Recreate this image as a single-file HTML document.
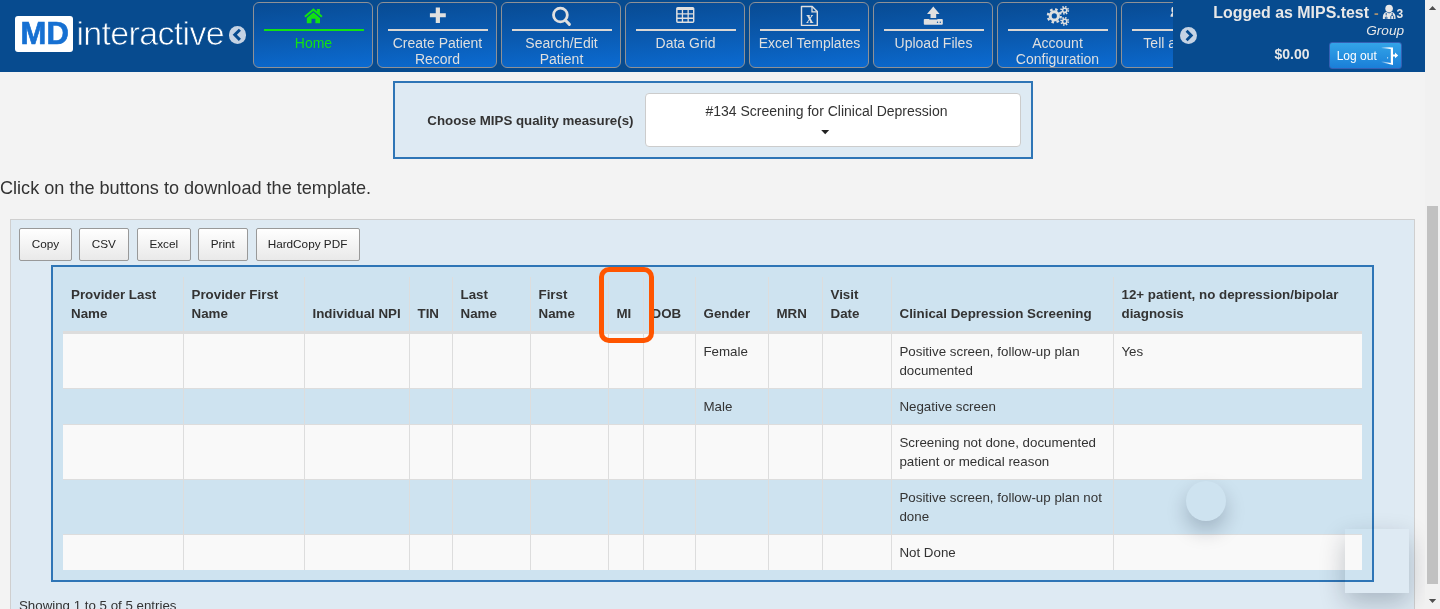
<!DOCTYPE html>
<html><head><meta charset="utf-8">
<style>
*{box-sizing:border-box}
html,body{margin:0;padding:0}
body{width:1440px;height:609px;overflow:hidden;background:#f3f3f3;font-family:"Liberation Sans",Arial,sans-serif;color:#333;position:relative}
#hdr{position:absolute;left:0;top:0;width:1425px;height:72px;background:#074b8f;overflow:hidden}
.logo-box{position:absolute;left:15px;top:16px;width:58.2px;height:36px;background:#fff;border-radius:3px}
.logo-md{position:absolute;left:20.6px;top:16px;color:#1670d2;font-weight:bold;font-size:31px;line-height:36px;letter-spacing:0.2px;-webkit-text-stroke:0.7px #1670d2}
.logo-txt{position:absolute;left:76.5px;top:13.3px;font-size:34px;line-height:40px;color:#fff;letter-spacing:-0.68px;-webkit-text-stroke:0.75px #074b8f}
.nav{position:absolute;top:2px;width:120px;height:66px;border:1px solid #8f9196;border-radius:6px;background:linear-gradient(175deg,#084b93 0%,#0a5ab0 50%,#0b6bd2 100%);color:#dfdfdf;text-align:center;font-size:14px;line-height:16px}
.nav .ln{position:absolute;left:10px;right:8px;top:26px;height:2px;background:#dad7d4}
.nav .tx{position:absolute;left:-3.5px;right:-4.5px;top:32px}
.nav svg{position:absolute;overflow:visible}
.nav.act{color:#12e212}
.nav.act .ln{background:#12e212}
#right{position:absolute;left:1173px;top:0;width:252px;height:72px;background:#074b8f}
.circ{position:absolute;width:17.6px;height:17.6px;border-radius:50%;background:#c5d3e4}
#right .t{position:absolute;white-space:nowrap;color:#e8e8e8}
#logout{position:absolute;left:155.8px;top:41.6px;width:73.7px;height:27px;border:1px solid #3560b4;border-radius:3px;background:linear-gradient(#33a4e8,#1a7fd8);color:#fff;font-size:12px;line-height:25px}
#sb{position:absolute;left:1425px;top:0;width:15px;height:609px;background:#f1f1f1}
#sb .th{position:absolute;left:2px;top:206px;width:11px;height:377.5px;background:#c1c1c1}
#choose{position:absolute;left:393px;top:81px;width:640px;height:78px;border:2px solid #2e75b6;background:#deeaf3}
#choose .lb{position:absolute;left:32.3px;top:29px;font-weight:bold;font-size:13.3px;line-height:17px;color:#333;white-space:nowrap}
#choose .sel{position:absolute;left:250px;top:10px;width:376px;height:54px;background:#fff;border:1px solid #ccc;border-radius:4px;text-align:center;font-size:14px;line-height:17px;color:#333;padding-top:9px;padding-right:13px}
#click{position:absolute;left:0;top:178px;font-size:18.1px;line-height:21px;color:#333;white-space:nowrap}
#panel{position:absolute;left:10px;top:219px;width:1405px;height:400px;background:#deeaf3;border:1px solid #cfcfcf}
.btn{position:absolute;top:8px;height:33px;border:1px solid #999;border-radius:2px;background:linear-gradient(#fff,#e9e9e9);font-size:11.75px;line-height:30px;text-align:center;color:#222}
#tw{position:absolute;left:51px;top:265px;width:1323px;height:317px;border:2px solid #2e75b6;background:#cee3f0}
table{position:absolute;left:10px;top:10px;border-collapse:separate;border-spacing:0;font-size:13.35px;line-height:19px;color:#333;table-layout:fixed;width:1299px}
th{white-space:nowrap;font-weight:bold;text-align:left;vertical-align:bottom;padding:8px 8px 8px 7.5px;border-bottom:2px solid #ddd;border-left:1px solid #ddd}
th:first-child{border-left:none;padding-left:8px}
td{vertical-align:top;padding:8px 8px 8px 7.4px;border-top:1px solid #ddd;border-left:1px solid #ddd}
td:first-child{border-left:none}
td.n{white-space:nowrap}
tr.o td{background:#f9f9f9}
#hl{position:absolute;left:599px;top:267px;width:55px;height:76px;border:5px solid #ff5500;border-radius:10px}
#show{position:absolute;left:19px;top:596px;font-size:13.3px;line-height:19px;color:#333;white-space:nowrap}
#fc{position:absolute;left:1186px;top:480.5px;width:40px;height:40px;border-radius:50%;background:transparent;box-shadow:0 10px 20px rgba(0,20,40,.22)}
#fr{position:absolute;left:1345px;top:528.6px;width:64px;height:64.4px;background:transparent;box-shadow:0 10px 26px rgba(0,20,40,.24)}
#all{position:absolute;left:0;top:0;width:1440px;height:609px;will-change:transform}
</style></head><body><div id="all">
<div id="hdr">
 <div class="logo-box"></div><div class="logo-md">MD</div><div class="logo-txt">interactive</div>
 <div class="circ" style="left:228.8px;top:26.4px"><svg width="18" height="18" viewBox="0 0 18 18" style="position:absolute;left:0;top:0"><path d="M10.9 3.7 L5.8 8.8 L10.9 13.9" fill="none" stroke="#074b8f" stroke-width="3"/></svg></div>
 <div class="nav act" style="left:253px"><div class="ln"></div><div class="tx">Home</div></div>
 <div class="nav" style="left:377px"><div class="ln"></div><div class="tx">Create Patient<br>Record</div></div>
 <div class="nav" style="left:501px"><div class="ln"></div><div class="tx">Search/Edit<br>Patient</div></div>
 <div class="nav" style="left:625px"><div class="ln"></div><div class="tx">Data Grid</div></div>
 <div class="nav" style="left:749px"><div class="ln"></div><div class="tx">Excel Templates</div></div>
 <div class="nav" style="left:873px"><div class="ln"></div><div class="tx">Upload Files</div></div>
 <div class="nav" style="left:997px"><div class="ln"></div><div class="tx">Account<br>Configuration</div></div>
 <div class="nav" style="left:1121px"><div class="ln"></div><div class="tx">Tell a Friend</div></div>
<svg id="ico" style="position:absolute;left:0;top:0" width="1425" height="72" viewBox="0 0 1425 72">
<g fill="#12e212"><path d="M313.4 8.3 L316.9 11.2 V9.1 H319.9 V13.8 L322.6 16.1 L321.3 17.6 L313.4 10.9 L305.5 17.6 L304.2 16.1 Z"/><path d="M313.4 12.3 L320 17.9 V23.2 H315.4 V18.8 H311.5 V23.2 H306.8 V17.9 Z"/></g>
<g fill="#e0e0e0">
<path d="M435.75 7.5 H439.95 V13.15 H445.8 V17.35 H439.95 V23 H435.75 V17.35 H429.9 V13.15 H435.75 Z"/>
<path fill-rule="evenodd" d="M677.7 6.9 H692.8 A1.6 1.6 0 0 1 694.4 8.5 V21.3 A1.6 1.6 0 0 1 692.8 22.9 H677.7 A1.6 1.6 0 0 1 676.1 21.3 V8.5 A1.6 1.6 0 0 1 677.7 6.9 Z M677.6 10.1 V13.2 H681.8 V10.1 Z M683.1 10.1 V13.2 H687.5 V10.1 Z M688.8 10.1 V13.2 H693 V10.1 Z M677.6 14.5 V17.6 H681.8 V14.5 Z M683.1 14.5 V17.6 H687.5 V14.5 Z M688.8 14.5 V17.6 H693 V14.5 Z M677.6 18.9 V21.6 H681.8 V18.9 Z M683.1 18.9 V21.6 H687.5 V18.9 Z M688.8 18.9 V21.6 H693 V18.9 Z"/>
<path d="M933.3 6.6 L939.6 13.9 H936.2 V18 H930.5 V13.9 H927 Z"/>
<path fill-rule="evenodd" d="M924.7 18.9 H929.2 V19.4 H937.4 V18.9 H941.9 A0.9 0.9 0 0 1 942.8 19.8 V23.8 A0.9 0.9 0 0 1 941.9 24.7 H924.7 A0.9 0.9 0 0 1 923.8 23.8 V19.8 A0.9 0.9 0 0 1 924.7 18.9 Z M937.5 21.6 A0.7 0.7 0 1 0 937.5 23 A0.7 0.7 0 1 0 937.5 21.6 Z M940.3 21.6 A0.7 0.7 0 1 0 940.3 23 A0.7 0.7 0 1 0 940.3 21.6 Z"/>
<circle cx="1174.6" cy="9.9" r="3.3"/><path d="M1170.5 16.8 C1170.5 13.6 1172.3 12.5 1175 12.5 S1179.5 13.6 1179.5 16.8 Z"/>
</g>
<g fill="none" stroke="#e0e0e0">
<circle cx="560.4" cy="15" r="6.9" stroke-width="2.8"/><path d="M565.4 20.2 L569.4 24.4" stroke-width="3" stroke-linecap="round"/>
<path d="M801.5 6.5 H812.2 L817.3 11.6 V25.4 H801.5 Z" stroke-width="1.4" stroke-linejoin="round"/><path d="M812 6.7 V11.8 H817.1" stroke-width="1.3"/>
<circle cx="1054.3" cy="15.9" r="4.1" stroke-width="3"/><circle cx="1054.3" cy="15.9" r="6.5" stroke-width="2.2" stroke-dasharray="2.55 2.555"/>
<circle cx="1064.7" cy="10.3" r="2.1" stroke-width="1.6"/><circle cx="1064.7" cy="10.3" r="3.6" stroke-width="1.7" stroke-dasharray="1.45 1.377"/>
<circle cx="1064.7" cy="21.4" r="2.1" stroke-width="1.6"/><circle cx="1064.7" cy="21.4" r="3.6" stroke-width="1.7" stroke-dasharray="1.45 1.377"/>
</g>
<text x="809.9" y="22.9" font-family="Liberation Serif,serif" font-weight="bold" font-size="17" fill="#e0e0e0" text-anchor="middle" transform="translate(809.9 0) scale(0.84 1) translate(-809.9 0)">x</text>
</svg>
 <div id="right">
  <div class="circ" style="left:6.5px;top:26.6px;width:17px;height:17px"><svg width="17" height="17" viewBox="0 0 17 17" style="position:absolute;left:0;top:0"><path d="M6.6 3.8 L11.3 8.5 L6.6 13.2" fill="none" stroke="#074b8f" stroke-width="2.8"/></svg></div>
  <div class="t" style="left:40.2px;top:3px;font-size:15.95px;line-height:19px;font-weight:bold">Logged as MIPS.test</div>
  <div class="t" style="left:201px;top:4px;font-size:14px;line-height:19px;font-weight:bold;color:#a89070">-</div>
  <svg style="position:absolute;left:209px;top:4px" width="15" height="16" viewBox="0 0 15 16"><circle cx="7.1" cy="4.6" r="3.8" fill="#e8e8e8"/><path fill="#e8e8e8" d="M0.9 15 C0.6 10.5 2.2 8.4 4.6 8.1 L7.1 9.6 L9.6 8.1 C12.2 8.4 13.8 10.5 13.5 15 Z"/><path d="M4.2 9 V11.4 M3.2 14 A1 1 0 1 0 5.2 14 A1 1 0 1 0 3.2 14 M10.2 9 V11 M8.8 14.8 V12.6 C8.8 11 11.6 11 11.6 12.6 V14.8" fill="none" stroke="#074b8f" stroke-width="0.9"/></svg>
  <div class="t" style="left:223.5px;top:6.9px;font-size:12px;line-height:14px;font-weight:bold">3</div>
  <div class="t" style="right:21px;top:23.1px;font-size:13.6px;line-height:16px;font-style:italic">Group</div>
  <div class="t" style="left:101.5px;top:45.5px;font-size:14px;line-height:17px;font-weight:bold">$0.00</div>
  <div id="logout"><span style="position:absolute;left:6.9px;top:1.4px">Log out</span>
   <svg style="position:absolute;left:50px;top:2px" width="22" height="22" viewBox="0 0 22 22"><defs><linearGradient id="dg" x1="0" x2="1" y1="0" y2="0"><stop offset="0" stop-color="#fff" stop-opacity="0.1"/><stop offset="0.7" stop-color="#fff" stop-opacity="1"/></linearGradient></defs><path d="M1.5 2 L13 2.4 V20 L1.5 17.2 L1.5 16.2 L10.8 18 V4 L1.5 3.2 Z" fill="url(#dg)"/><path d="M12.6 9.4 H15 V7.6 L18.2 10.4 L15 13.2 V11.4 H12.6 Z" fill="#fff"/><circle cx="7.6" cy="12.8" r="0.6" fill="#fff"/></svg>
  </div>
 </div>
</div>
<div id="choose"><div class="lb">Choose MIPS quality measure(s)</div><div class="sel">#134 Screening for Clinical Depression<svg style="position:absolute;left:175.2px;top:35.8px" width="8.4" height="5" viewBox="0 0 8 5"><path d="M0 0 H8 L4 4.3 Z" fill="#222"/></svg></div></div>
<div id="click">Click on the buttons to download the template.</div>
<div id="panel">
 <div class="btn" style="left:8px;width:53px">Copy</div>
 <div class="btn" style="left:68px;width:49.5px">CSV</div>
 <div class="btn" style="left:126px;width:53.5px">Excel</div>
 <div class="btn" style="left:187px;width:49.5px">Print</div>
 <div class="btn" style="left:244.5px;width:104px">HardCopy PDF</div>
</div>
<div id="tw">
<table>
<colgroup><col style="width:120px"><col style="width:121px"><col style="width:105px"><col style="width:43px"><col style="width:78px"><col style="width:78px"><col style="width:35px"><col style="width:52px"><col style="width:73px"><col style="width:54px"><col style="width:69px"><col style="width:222px"><col style="width:249px"></colgroup>
<tr><th>Provider Last<br>Name</th><th>Provider First<br>Name</th><th>Individual NPI</th><th>TIN</th><th>Last<br>Name</th><th>First<br>Name</th><th>MI</th><th>DOB</th><th>Gender</th><th>MRN</th><th>Visit<br>Date</th><th>Clinical Depression Screening</th><th>12+ patient, no depression/bipolar<br>diagnosis</th></tr>
<tr class="o"><td></td><td></td><td></td><td></td><td></td><td></td><td></td><td></td><td>Female</td><td></td><td></td><td class="n">Positive screen, follow-up plan<br>documented</td><td>Yes</td></tr>
<tr><td></td><td></td><td></td><td></td><td></td><td></td><td></td><td></td><td>Male</td><td></td><td></td><td>Negative screen</td><td></td></tr>
<tr class="o"><td></td><td></td><td></td><td></td><td></td><td></td><td></td><td></td><td></td><td></td><td></td><td class="n">Screening not done, documented<br>patient or medical reason</td><td></td></tr>
<tr><td></td><td></td><td></td><td></td><td></td><td></td><td></td><td></td><td></td><td></td><td></td><td class="n">Positive screen, follow-up plan not<br>done</td><td></td></tr>
<tr class="o"><td></td><td></td><td></td><td></td><td></td><td></td><td></td><td></td><td></td><td></td><td></td><td>Not Done</td><td></td></tr>
</table>
</div>
<div id="hl"></div>
<div id="fc"></div>
<div id="fr"></div>
<div id="show">Showing 1 to 5 of 5 entries</div>
<div id="sb"><div class="th"></div>
<svg style="position:absolute;left:0;top:0" width="15" height="609" viewBox="0 0 15 609"><path d="M3.9 10 L7.5 6 L11.2 10 Z M3.9 599 L7.5 603 L11.2 599 Z" fill="#505050"/></svg>
</div>
</div></body></html>
